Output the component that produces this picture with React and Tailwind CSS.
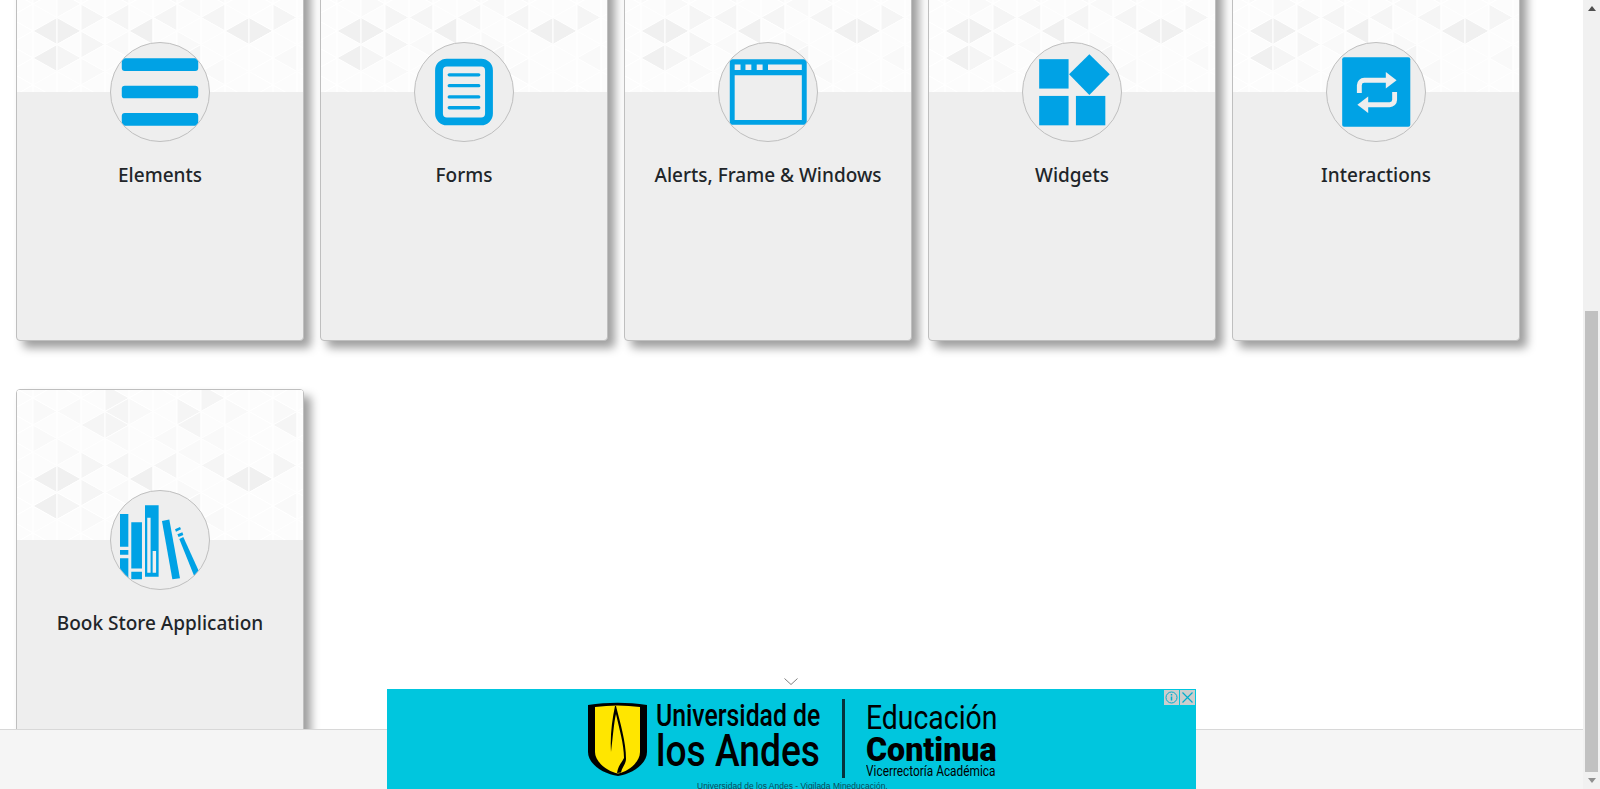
const DARK = [[31,89],[51,89],[122,89],[217,89],[239,89],[29,121],[216,121],[125,115]];
const MID = [[76,31],[97,31],[169,31],[262,31],[279,31],[99,14],[167,14],[191,5],[8,3],[74,74],[101,74],[262,74],[282,74],[197,74],[173,115],[145,74],[51,115],[76,102],[16,74]];
const LIGHT = [[50,20],[122,18],[215,18],[240,45],[145,45],[28,48],[195,48],[100,45],[50,60],[170,60],[240,100],[100,100],[170,100],[265,115],[145,130],[75,130],[195,130],[28,20],[265,18]];

const near = (list, x, y) => list.some(([a, b]) => Math.abs(a - x) < 8 && Math.abs(b - y) < 8);
const shade = (x, y) => (near(DARK, x, y) ? "#f0f0f0" : near(MID, x, y) ? "#f5f5f5" : near(LIGHT, x, y) ? "#f9f9f9" : "#fcfcfc");

const Pattern = () => {
  const cw = 24, s = 27;
  const tris = [];
  for (let k = -2; k < 12; k++) {
    const x0 = 40 + cw * k;
    const x1 = x0 + cw;
    const odd = Math.abs(k) % 2 === 1;
    for (let j = -4; j < 5; j++) {
      // vertices on the column x0 and on the column x1 are half a side apart
      const y0 = 75.5 + j * s + (odd ? s / 2 : 0);
      const y1 = 75.5 + j * s + (odd ? 0 : s / 2);
      // triangle with its flat side on x0, pointing right
      tris.push(<polygon key={`r${k}_${j}`} points={`${x0},${y0} ${x0},${y0 + s} ${x1},${y0 + s / 2}`} fill={shade(x0 + 8, y0 + s / 2)} stroke="#ffffff" strokeWidth="1" />);
      // triangle with its flat side on x1, pointing left
      tris.push(<polygon key={`l${k}_${j}`} points={`${x1},${y1} ${x1},${y1 + s} ${x0},${y1 + s / 2}`} fill={shade(x1 - 8, y1 + s / 2)} stroke="#ffffff" strokeWidth="1" />);
    }
  }
  return (
    <svg className="absolute inset-0 h-full w-full" viewBox="0 0 286 150" preserveAspectRatio="none" aria-hidden="true">
      <rect width="286" height="150" fill="#fcfcfc" />
      {tris}
    </svg>
  );
};

const ElementsIcon = () => (
  <svg viewBox="0 0 100 100" className="h-full w-full">
    <rect x="11" y="15.500" width="78" height="13" rx="3" fill="#00a2e5" />
    <rect x="11" y="43.500" width="78" height="13" rx="3" fill="#00a2e5" />
    <rect x="11" y="71.500" width="78" height="13" rx="3" fill="#00a2e5" />
  </svg>
);
const FormsIcon = () => (
  <svg viewBox="0 0 100 100" className="h-full w-full">
    <rect x="24.500" y="20" width="51" height="60" rx="8" fill="none" stroke="#00a2e5" strokeWidth="8" />
    <g stroke="#00a2e5" strokeWidth="3.500" strokeLinecap="round">
      <path d="M35 32.500H65" />
      <path d="M35 43.500H65" />
      <path d="M35 55H65" />
      <path d="M35 66H65" />
    </g>
  </svg>
);
const WindowIcon = () => (
  <svg viewBox="0 0 100 100" className="h-full w-full">
    <path fillRule="evenodd" fill="#00a2e5" d="M14 16.500h72.500a3 3 0 0 1 3 3v61a3 3 0 0 1-3 3H14a3 3 0 0 1-3-3v-61a3 3 0 0 1 3-3Zm2 16.500v45.500h68.500V33ZM16 22v5.500h6V22Zm11 0v5.500h6V22Zm11.500 0v5.500h6V22Zm11.500 0v5.500h34.500V22Z" />
  </svg>
);
const WidgetsIcon = () => (
  <svg viewBox="0 0 100 100" className="h-full w-full">
    <g fill="#00a2e5">
      <rect x="16.500" y="16.500" width="30" height="30" />
      <rect x="16.500" y="54" width="30" height="30" />
      <rect x="54" y="54" width="30" height="30" />
      <polygon points="67.700,11.500 88.500,32 67.700,53 47,32" />
    </g>
  </svg>
);
const InteractionsIcon = () => (
  <svg viewBox="0 0 100 100" className="h-full w-full">
    <rect x="15.500" y="14.500" width="69.500" height="71" rx="2" fill="#00a2e5" />
    <g fill="none" stroke="#eeeeee" strokeWidth="5">
      <path d="M33 51v-8a5 5 0 0 1 5-5h24" />
      <path d="M69 50v8a5 5 0 0 1-5 5H40" />
    </g>
    <polygon points="60,29.500 71,38 60,46.500" fill="#eeeeee" />
    <polygon points="42,54.500 31,63 42,71.500" fill="#eeeeee" />
  </svg>
);
const BooksIcon = () => (
  <svg viewBox="0 0 100 100" className="h-full w-full">
    <g fill="#00a2e5">
      <path d="M9.200 23.500h8.500v33.400H9.200ZM9.200 60.200h8.500V65H9.200ZM9.200 68.600h8.500V96H9.200Z" />
      <path d="M20.700 32h10.900v47H20.700ZM20.700 82.300h10.900V90H20.700Z" />
      <path fillRule="evenodd" d="M34.700 14.600h13.900v72.800H34.700ZM37 27.200v56.100h3.400V27.200Zm5.500 34v22.100H46V61.200Z" />
      <polygon points="52,30.600 59.500,29 70.400,89 62.600,90" />
      <polygon points="65.300,39 70.400,36.700 71.400,39 66.300,41.500" />
      <polygon points="67.700,44.200 72.800,42 73.800,44.900 69,46.900" />
      <polygon points="69.700,49 73.800,47 92,87 87,92" />
    </g>
  </svg>
);

const Card = ({ title, icon }) => (
  <div className="h-[400px] w-[288px] shrink-0 rounded-[4px] border border-[#bfbfbf] bg-[#eeeeee] shadow-[7px_7px_10px_rgba(0,0,0,0.38)]">
    <div className="relative h-[150px] overflow-hidden rounded-t-[3px] bg-[#fcfcfc]">
      <Pattern />
    </div>
    <div className="relative mx-auto -mt-[50px] h-[100px] w-[100px] overflow-hidden rounded-full border border-[#bfbfbf] bg-[#eeeeee]">
      {icon}
    </div>
    <p className="mt-[21px] text-center text-[19px] font-medium leading-[24px] text-[#212529]">{title}</p>
  </div>
);

export default function App() {
  return (
    <div className="relative h-[789px] w-[1600px] overflow-hidden bg-white font-['Noto_Sans','Open_Sans',sans-serif]">
      <div className="-mt-[59px] flex flex-col gap-[48px] pl-[16px]">
        <div className="flex gap-[16px]">
          <Card title="Elements" icon={<ElementsIcon />} />
          <Card title="Forms" icon={<FormsIcon />} />
          <Card title="Alerts, Frame & Windows" icon={<WindowIcon />} />
          <Card title="Widgets" icon={<WidgetsIcon />} />
          <Card title="Interactions" icon={<InteractionsIcon />} />
        </div>
        <div className="flex gap-[16px]">
          <Card title="Book Store Application" icon={<BooksIcon />} />
        </div>
      </div>

      <div className="absolute bottom-0 left-0 h-[60px] w-[1583px] border-t border-[#d8d8d8] bg-[#f5f5f5]" />

      <svg className="absolute left-[784px] top-[677px] h-[9px] w-[14px]" viewBox="0 0 14 9" aria-hidden="true">
        <path d="M0.500 1.500 7 7.500l6.500-6" fill="none" stroke="#808080" strokeWidth="1" />
      </svg>

      <div className="absolute left-[387px] top-[689px] h-[100px] w-[809px] overflow-hidden bg-[#00c6de]">
        <div className="absolute right-[1px] top-px flex h-[15px] gap-px">
          <div className="flex w-[15px] items-center justify-center bg-[#cdcdcd]">
            <svg viewBox="0 0 15 15" className="h-[15px] w-[15px]">
              <circle cx="7.500" cy="7.500" r="5.500" fill="none" stroke="#00aecd" strokeWidth="1" />
              <path d="M7.500 6.500v4M7.500 4v1.500" stroke="#00aecd" strokeWidth="1.500" />
            </svg>
          </div>
          <div className="flex w-[15px] items-center justify-center bg-[#cdcdcd]">
            <svg viewBox="0 0 15 15" className="h-[15px] w-[15px]">
              <path d="M2.500 2.500l10 10M12.500 2.500l-10 10" stroke="#00aecd" strokeWidth="1.200" />
            </svg>
          </div>
        </div>

        <div className="flex items-start pl-[201px] pt-[13px]">
          <svg viewBox="0 0 59 74" className="h-[74px] w-[59px] shrink-0">
            <path d="M0 3C20 0 39 0 59 3V50C59 62 44 72 30 74C15 72 0 62 0 50Z" fill="#000000" />
            <path d="M7 5C22 3 37 3 52 5V50C52 60 40 70 30 71.500C20 70 7 60 7 50Z" fill="#ffe600" />
            <path d="M27 4C24 18 22 34 23 50C25 34 26 20 28 12C31 26 36 42 36 56C34 60 30 64 29 71L33 70.500C34 65 38 62 38 57C38 40 32 20 28 4Z" fill="#000000" />
          </svg>
          <div className="ml-[9px] w-[163px] font-['Roboto',sans-serif] text-black">
            <div className="mt-[2px] origin-left scale-x-[0.8] whitespace-nowrap text-[31px] font-medium leading-[24px]">Universidad de</div>
            <div className="mt-[6px] origin-left scale-x-[0.845] whitespace-nowrap text-[44px] font-medium leading-[34px]">los Andes</div>
          </div>
          <div className="ml-[23px] -mt-[3px] h-[79px] w-[3px] bg-[#06323d]" />
          <div className="ml-[21px] w-[130px] font-['Roboto',sans-serif] text-black">
            <div className="mt-px origin-left scale-x-[0.86] whitespace-nowrap text-[33px] font-normal leading-[30px]">Educación</div>
            <div className="mt-[3px] origin-left scale-x-[0.945] whitespace-nowrap text-[34px] font-black leading-[26px]">Continua</div>
            <div className="mt-[2px] origin-left scale-x-[0.79] whitespace-nowrap text-[15px] leading-[14px]">Vicerrectoría Académica</div>
          </div>
        </div>
        <div className="absolute left-[310px] top-[92px] whitespace-nowrap font-['Liberation_Sans',sans-serif] text-[8.5px] leading-[10px] text-[#0a4a5a]">Universidad de los Andes - Vigilada Mineducación.</div>
      </div>

      <div className="absolute right-0 top-0 flex h-[789px] w-[17px] flex-col bg-[#f1f1f1]">
        <div className="flex h-[17px] items-center justify-center">
          <svg viewBox="0 0 8 5" className="h-[5px] w-[8px]"><polygon points="4,0 8,5 0,5" fill="#505050" /></svg>
        </div>
        <div className="mx-[2px] mt-[294px] h-[461px] bg-[#c1c1c1]" />
        <div className="flex h-[17px] items-center justify-center">
          <svg viewBox="0 0 8 5" className="h-[5px] w-[8px]"><polygon points="0,0 8,0 4,5" fill="#909090" /></svg>
        </div>
      </div>
    </div>
  );
}
